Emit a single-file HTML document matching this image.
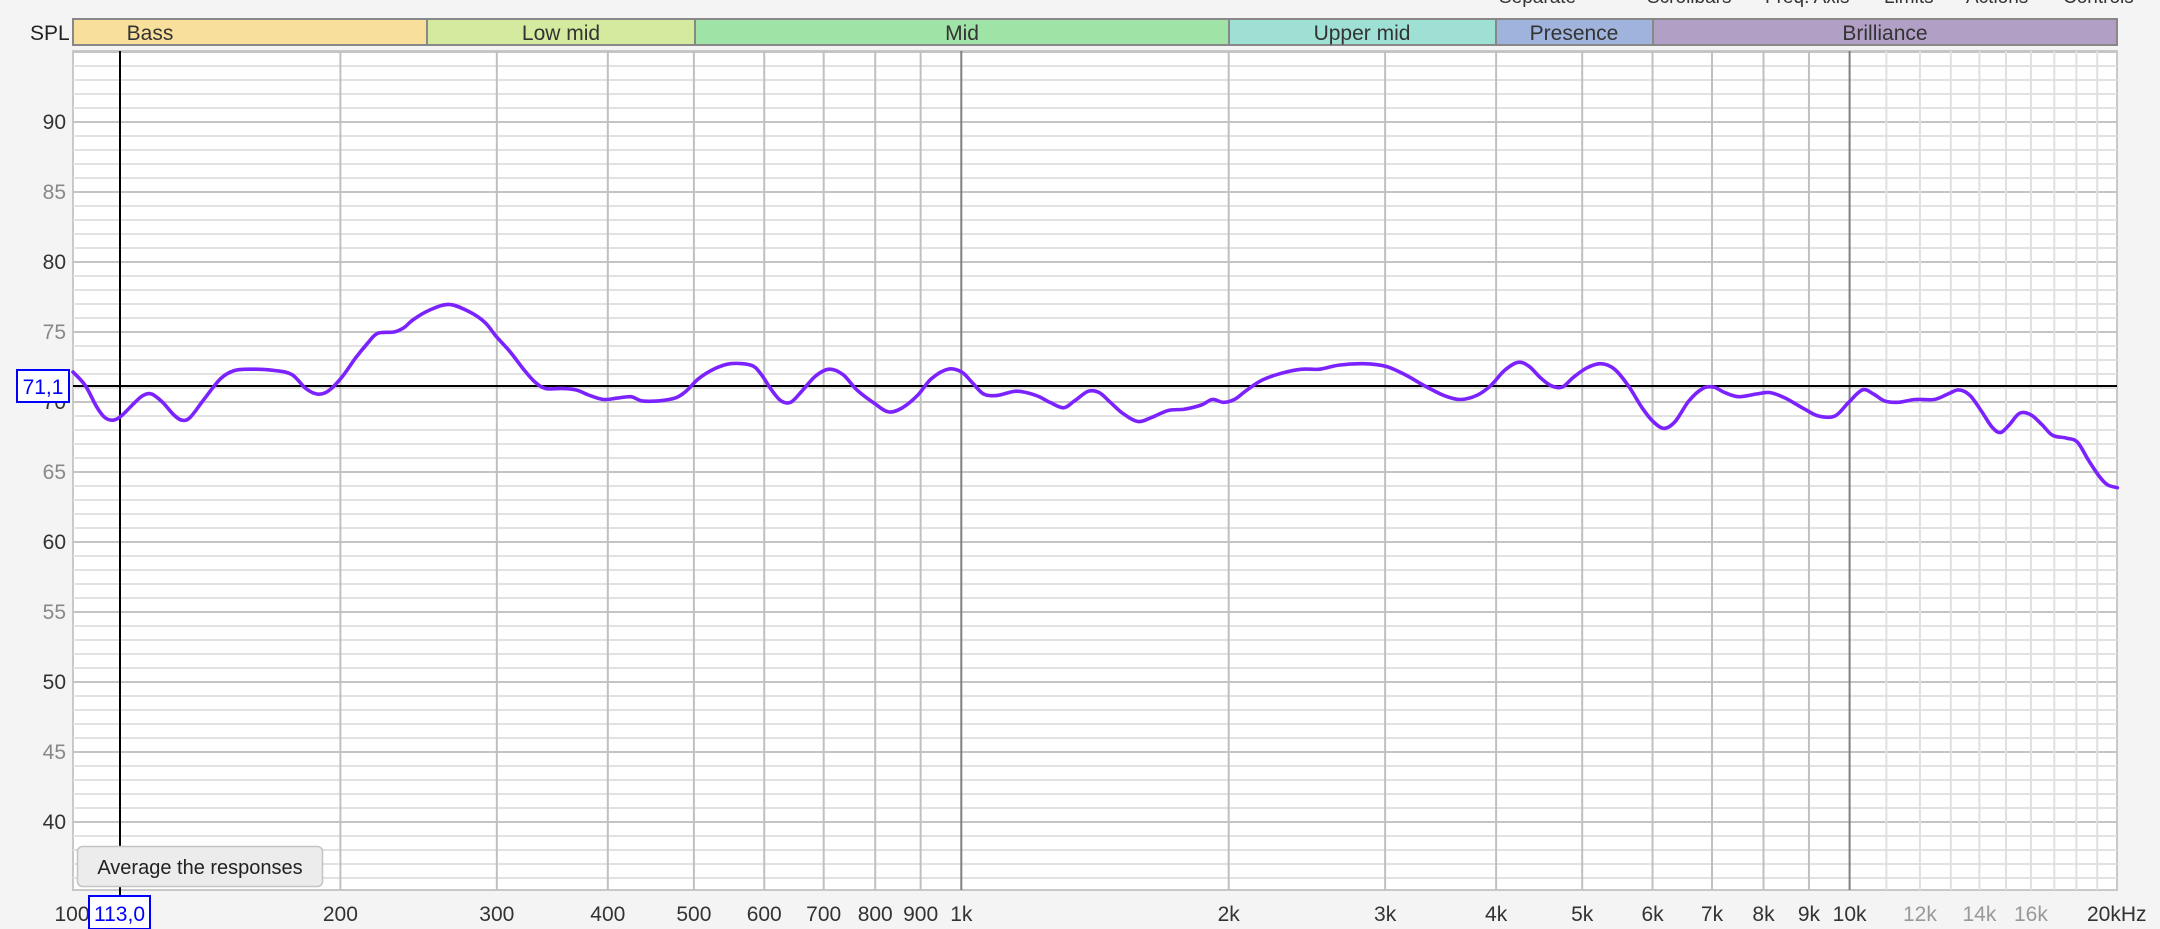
<!DOCTYPE html>
<html><head><meta charset="utf-8">
<style>
html,body{margin:0;padding:0;background:#f4f4f4;width:2160px;height:929px;overflow:hidden;font-family:"Liberation Sans Narrow","Liberation Sans",sans-serif;}
svg text{font-family:"Liberation Sans Narrow","Liberation Sans",sans-serif;}
</style></head><body>
<svg id="s" width="2160" height="929" xmlns="http://www.w3.org/2000/svg">
<rect x="0" y="0" width="2160" height="929" fill="#f4f4f4"/>
<g font-size="19" fill="#333">
<text x="1499" y="3">Separate</text>
<text x="1647" y="3">Scrollbars</text>
<text x="1765" y="3">Freq. Axis</text>
<text x="1884" y="3">Limits</text>
<text x="1966" y="3">Actions</text>
<text x="2063" y="3">Controls</text>
</g>
<text x="30" y="40" font-size="21" fill="#222">SPL</text>
<g stroke="#888" stroke-width="2">
<rect x="73" y="19" width="354" height="26" fill="#f8e09c"/>
<rect x="427" y="19" width="268" height="26" fill="#d3ea9f"/>
<rect x="695" y="19" width="534" height="26" fill="#9fe3a6"/>
<rect x="1229" y="19" width="267" height="26" fill="#9ee0d4"/>
<rect x="1496" y="19" width="157" height="26" fill="#9fb3dc"/>
<rect x="1653" y="19" width="464" height="26" fill="#b19fc6"/>
</g>
<g font-size="21" fill="#333" text-anchor="middle">
<text x="150" y="40">Bass</text>
<text x="561" y="40">Low mid</text>
<text x="962" y="40">Mid</text>
<text x="1362" y="40">Upper mid</text>
<text x="1574" y="40">Presence</text>
<text x="1885" y="40">Brilliance</text>
</g>
<rect x="73" y="51" width="2044" height="839" fill="#fff" stroke="#c8c8c8" stroke-width="2"/>
<g id="grid"></g>
<g id="lab"></g>
<line x1="120" y1="51" x2="120" y2="895" stroke="#000" stroke-width="2"/>
<line x1="73" y1="386" x2="2117" y2="386" stroke="#000" stroke-width="2"/>
<path id="curve" fill="none" stroke="#7b22ff" stroke-width="3.6" stroke-linejoin="round" stroke-linecap="round" d=""/>
<rect x="17" y="370" width="52" height="32" fill="#fff" stroke="#0000ff" stroke-width="2"/>
<text x="43" y="394" font-size="21" fill="#0000ff" text-anchor="middle">71,1</text>
<rect x="89" y="896" width="61" height="33" fill="#fff" stroke="#0000ff" stroke-width="2"/>
<text x="119.5" y="921" font-size="21" fill="#0000ff" text-anchor="middle">113,0</text>
<rect x="77.5" y="846.5" width="245" height="40" rx="5" fill="#ececec" stroke="#c4c4c4" stroke-width="1.5"/>
<text x="200" y="874" font-size="20" fill="#222" text-anchor="middle">Average the responses</text>
</svg>
<script>
var NS="http://www.w3.org/2000/svg";
var g=document.getElementById("grid"),lab=document.getElementById("lab");
function el(p,t,a,txt){var e=document.createElementNS(NS,t);for(var k in a)e.setAttribute(k,a[k]);if(txt)e.textContent=txt;p.appendChild(e);return e;}
function X(f){return 73+888.3*Math.log10(f/100);}
function Y(d){return 122+(90-d)*14;}
for(var d=36;d<=95;d++){var y=Y(d);var maj=(d%5==0);
el(g,"line",{x1:73,x2:2117,y1:y,y2:y,stroke:maj?"#c4c4c4":"#e2e2e2","stroke-width":2});}
for(var d=40;d<=90;d+=5){el(lab,"text",{x:66,y:Y(d)+7,"font-size":21,"text-anchor":"end",fill:(d%10==0)?"#333":"#888"},""+d);}
var fs=[200,300,400,500,600,700,800,900,1000,2000,3000,4000,5000,6000,7000,8000,9000,10000];
fs.forEach(function(f){var x=X(f);el(g,"line",{x1:x,x2:x,y1:51,y2:890,stroke:(f==1000||f==10000)?"#808080":"#c0c0c0","stroke-width":2});});
for(var f=11000;f<=19000;f+=1000){var x=X(f);el(g,"line",{x1:x,x2:x,y1:51,y2:890,stroke:"#e0e0e0","stroke-width":2});}
var L=[[100,"100"],[200,"200"],[300,"300"],[400,"400"],[500,"500"],[600,"600"],[700,"700"],[800,"800"],[900,"900"],[1000,"1k"],[2000,"2k"],[3000,"3k"],[4000,"4k"],[5000,"5k"],[6000,"6k"],[7000,"7k"],[8000,"8k"],[9000,"9k"],[10000,"10k"],[12000,"12k"],[14000,"14k"],[16000,"16k"]];
L.forEach(function(a){var x=X(a[0]);if(a[0]==100)x=72;el(lab,"text",{x:x,y:921,"font-size":21,"text-anchor":"middle",fill:(a[0]>10000)?"#999":"#333"},a[1]);});
el(lab,"text",{x:2087,y:921,"font-size":21,fill:"#333"},"20kHz");
var pts="53,270 62,280 70,295 76,303 82,305 88,302 98,292 104,287 110,286 118,292 126,301 132,305 138,303 148,290 160,275 170,269 182,268 200,269 212,272 222,282 230,286 238,284 248,274 258,260 267,249 274,242 286,241 293,238 300,232 312,225 326,221 340,226 352,234 360,244 370,255 380,268 388,277 396,282 408,282 418,283 428,287 438,290 448,289 458,288 466,291 478,291 490,289 498,284 507,275 518,268 530,264 545,265 552,271 560,283 567,291 574,292 582,284 592,273 602,268 612,272 622,283 635,293 645,299 655,296 666,287 676,275 688,268 698,270 706,278 714,286 724,287 738,284 752,287 762,292 772,296 780,291 790,284 798,285 806,292 815,300 826,306 836,303 848,298 860,297 872,294 880,290 888,292 896,290 904,284 916,276 930,271 945,268 958,268 972,265 990,264 1006,266 1020,272 1034,280 1048,287 1060,290 1072,287 1082,280 1092,269 1102,263 1110,266 1118,274 1126,280 1134,281 1142,274 1152,267 1162,264 1172,268 1182,280 1192,296 1200,306 1208,311 1216,306 1226,291 1236,282 1244,281 1252,285 1262,288 1275,286 1285,285 1296,289 1310,297 1320,302 1332,302 1342,292 1352,283 1360,286 1368,291 1378,292 1390,290 1404,290 1414,286 1422,283 1430,287 1438,298 1446,310 1452,314 1458,309 1466,300 1474,301 1482,308 1490,316 1500,318 1508,321 1516,334 1524,346 1530,352 1537,354".split(" ").map(function(s){var p=s.split(",");return [p[0]*1.3776,p[1]*1.3776];});
var d="M"+pts[0][0].toFixed(1)+","+pts[0][1].toFixed(1);
for(var i=0;i<pts.length-1;i++){var p0=pts[Math.max(i-1,0)],p1=pts[i],p2=pts[i+1],p3=pts[Math.min(i+2,pts.length-1)];
var c1x=p1[0]+(p2[0]-p0[0])/6,c1y=p1[1]+(p2[1]-p0[1])/6,c2x=p2[0]-(p3[0]-p1[0])/6,c2y=p2[1]-(p3[1]-p1[1])/6;
d+=" C"+c1x.toFixed(1)+","+c1y.toFixed(1)+" "+c2x.toFixed(1)+","+c2y.toFixed(1)+" "+p2[0].toFixed(1)+","+p2[1].toFixed(1);}
document.getElementById("curve").setAttribute("d",d);
</script>
</body></html>
